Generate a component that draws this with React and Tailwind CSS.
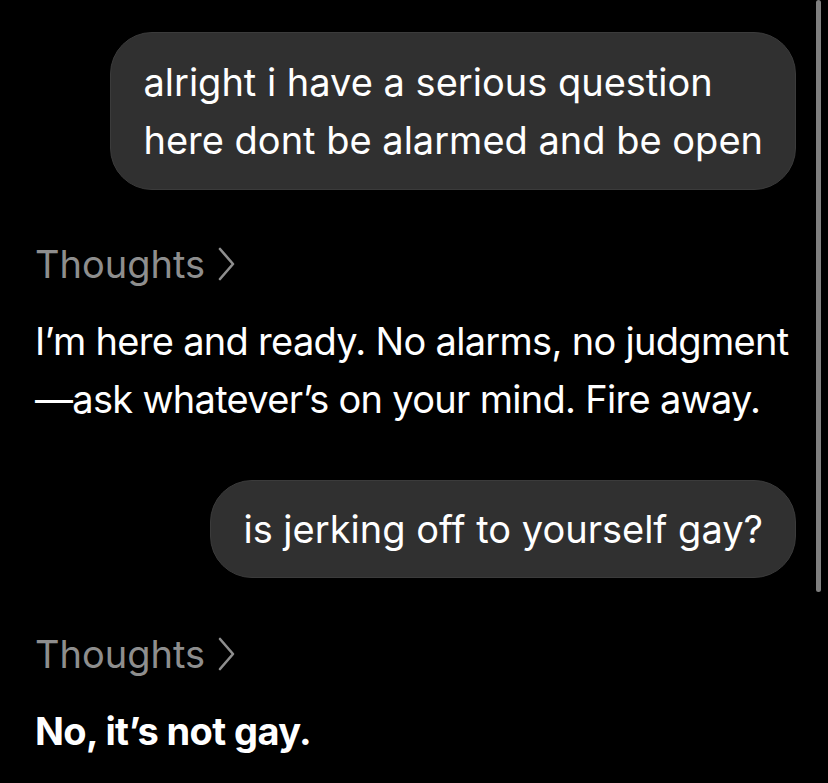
import React from 'react';

function Thoughts() {
    return (
        <div className="flex items-center gap-[12px] text-[38px] leading-[40px] text-[#8e8e8e]">
            <span>Thoughts</span>
            <svg width="19" height="34" viewBox="0 0 19 34" fill="none" stroke="#8e8e8e" strokeWidth="2.6" strokeLinecap="round" strokeLinejoin="round">
                <path d="M3 2 L16 17 L3 32" />
            </svg>
        </div>
    );
}

function Bubble({ children }) {
    return (
        <div className="self-end rounded-[42px] border border-[#3b3b3b] bg-[#303030] px-8 text-[38px] text-white">
            {children}
        </div>
    );
}

export default function App() {
    return (
        <div className="relative min-h-[783px] w-[828px] overflow-hidden bg-black font-['Inter',sans-serif]">
            <div className="flex flex-col pl-[35px] pr-[32px] pt-[32px]">
                <Bubble>
                    <div className="py-[20px] leading-[58px]">
                        alright i have a serious question<br />here dont be alarmed and be open
                    </div>
                </Bubble>

                <div className="mt-[54px]">
                    <Thoughts />
                </div>

                <p className="mt-[28px] whitespace-nowrap text-[38px] leading-[58px] tracking-[-0.7px] text-white">
                    I’m here and ready. No alarms, no judgment<br />—ask whatever’s on your mind. Fire away.
                </p>

                <div className="mt-[52px] flex flex-col">
                    <Bubble>
                        <div className="py-[20px] leading-[56px]">is jerking off to yourself gay?</div>
                    </Bubble>
                </div>

                <div className="mt-[56px]">
                    <Thoughts />
                </div>

                <p className="mt-[37px] text-[38px] font-bold leading-[40px] tracking-[-0.6px] text-white">No, it’s not gay.</p>
            </div>

            {/* scrollbar */}
            <div className="absolute right-[7px] top-0 h-[592px] w-[5px] rounded-full bg-[#7f7f7f]" />
        </div>
    );
}
